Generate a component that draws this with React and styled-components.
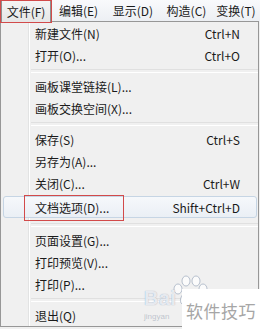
import React from "react";
import styled, { createGlobalStyle } from "styled-components";

const Global = createGlobalStyle`
  html, body { margin: 0; padding: 0; background: #f0f0f0; }
  * { box-sizing: border-box; }
`;

const Screen = styled.div`
  position: relative;
  width: 260px;
  height: 329px;
  overflow: hidden;
  background: #f0f0f0;
  font-family: "Noto Sans CJK SC", "Microsoft YaHei", sans-serif;
  font-size: 12px;
  color: #1a1a1a;
`;

const MenuBar = styled.div`
  display: flex;
  align-items: stretch;
  height: 22px;
  padding-left: 1px;
  background: linear-gradient(#f9fafc, #eceff3);
`;

const BarItem = styled.div`
  position: relative;
  display: flex;
  align-items: center;
  justify-content: center;
  width: ${p => (p.$w ? p.$w : 53)}px;
  height: 22px;
  line-height: 1;
  ${p =>
    p.$open &&
    `
    background: linear-gradient(#f4f4f4, #e6e6e6);
    border: 1px solid #8e8f8f;
    border-bottom: none;
    z-index: 2;
  `}
`;

const Annot = styled.div`
  position: absolute;
  border: 1px solid #d24a4a;
  pointer-events: none;
  z-index: 5;
`;

const Panel = styled.div`
  position: relative;
  display: flex;
  flex-direction: column;
  width: 259px;
  height: 306px;
  margin-top: -1px;
  border: 1px solid #979797;
  background: #f0f0f0;
`;

const Gutter = styled.div`
  position: absolute;
  top: 0;
  bottom: 0;
  left: 27px;
  width: 2px;
  border-left: 1px solid #e2e3e3;
  border-right: 1px solid #ffffff;
`;

const Row = styled.div`
  position: relative;
  display: flex;
  align-items: center;
  height: ${p => p.$h || 22}px;
  padding: 0 18px 0 34px;
`;

const Hover = styled.div`
  position: absolute;
  left: 2px;
  right: 1px;
  top: 2px;
  bottom: 2px;
  border: 1px solid #c6d5e4;
  border-radius: 3px;
  background: linear-gradient(#f6f8fb, #eaeff5);
`;

const Label = styled.span`
  position: relative;
  flex: 1;
  white-space: nowrap;
`;

const Shortcut = styled.span`
  position: relative;
  white-space: nowrap;
`;

const Sep = styled.div`
  position: relative;
  height: 9px;
  display: flex;
  align-items: center;
  padding-left: 30px;
  &::after {
    content: "";
    flex: 1;
    height: 2px;
    border-top: 1px solid #e0e0e0;
    border-bottom: 1px solid #ffffff;
  }
`;

const Watermark = styled.div`
  position: absolute;
  right: 0;
  bottom: 0;
  width: 120px;
  height: 62px;
  z-index: 6;
  pointer-events: none;
`;

const BaiText = styled.div`
  position: absolute;
  left: 4px;
  top: 20px;
  font-family: "Liberation Sans", Arial, sans-serif;
  font-weight: bold;
  font-size: 20px;
  color: rgba(255, 255, 255, 0.8);
  text-shadow: 0 0 1px rgba(110, 130, 165, 0.8);
  letter-spacing: 0.5px;
`;

const Jing = styled.div`
  position: absolute;
  left: 4px;
  top: 45px;
  font-family: "Liberation Sans", Arial, sans-serif;
  font-size: 8px;
  color: rgba(140, 150, 170, 0.5);
`;

const WmBox = styled.div`
  position: absolute;
  right: 0;
  bottom: 0;
  width: 78px;
  height: 40px;
  background: #ffffff;
  display: flex;
  align-items: center;
  justify-content: center;
  font-size: 17px;
  color: #a6a6a6;
  letter-spacing: 0.5px;
  padding-top: 2px;
`;

const items = [
  { t: "新建文件(N)", s: "Ctrl+N" },
  { t: "打开(O)...", s: "Ctrl+O" },
  { sep: true },
  { t: "画板课堂链接(L)..." },
  { t: "画板交换空间(X)..." },
  { sep: true },
  { t: "保存(S)", s: "Ctrl+S" },
  { t: "另存为(A)..." },
  { t: "关闭(C)...", s: "Ctrl+W" },
  { t: "文档选项(D)...", s: "Shift+Ctrl+D", hot: true },
  { sep: true },
  { t: "页面设置(G)..." },
  { t: "打印预览(V)..." },
  { t: "打印(P)..." },
  { sep: true },
  { t: "退出(Q)" },
];

export default function App() {
  return (
    <Screen>
      <Global />
      <MenuBar>
        <BarItem $open $w={50}>文件(F)</BarItem>
        <BarItem $w={55}>编辑(E)</BarItem>
        <BarItem $w={54}>显示(D)</BarItem>
        <BarItem $w={53}>构造(C)</BarItem>
        <BarItem $w={46}>变换(T)</BarItem>
      </MenuBar>
      <Annot style={{ left: 0, top: 0, width: 52, height: 23 }} />
      <Panel>
        <Gutter />
        {items.map((it, i) =>
          it.sep ? (
            <Sep key={i} />
          ) : (
            <Row key={i} $h={it.hot ? 26 : 22}>
              {it.hot && <Hover />}
              <Label>{it.t}</Label>
              {it.s && <Shortcut>{it.s}</Shortcut>}
              {it.hot && (
                <Annot style={{ left: 23, top: 1, width: 100, height: 26 }} />
              )}
            </Row>
          )
        )}
      </Panel>
      <Watermark>
        <svg
          width="40"
          height="34"
          viewBox="0 0 40 34"
          style={{ position: "absolute", left: 30, top: 6 }}
        >
          <g fill="rgba(255,255,255,0.75)" stroke="rgba(130,145,170,0.55)" strokeWidth="1">
            <ellipse cx="8" cy="16" rx="4" ry="5" />
            <ellipse cx="16" cy="8" rx="4" ry="5" />
            <ellipse cx="26" cy="8" rx="4" ry="5" />
            <ellipse cx="33" cy="16" rx="4" ry="5" />
            <path d="M20 18 C12 18 8 28 12 31 C16 33 24 33 28 31 C32 28 28 18 20 18 Z" />
          </g>
        </svg>
        <BaiText>Bai</BaiText>
        <Jing>jingyan</Jing>
        <WmBox>软件技巧</WmBox>
      </Watermark>
    </Screen>
  );
}
